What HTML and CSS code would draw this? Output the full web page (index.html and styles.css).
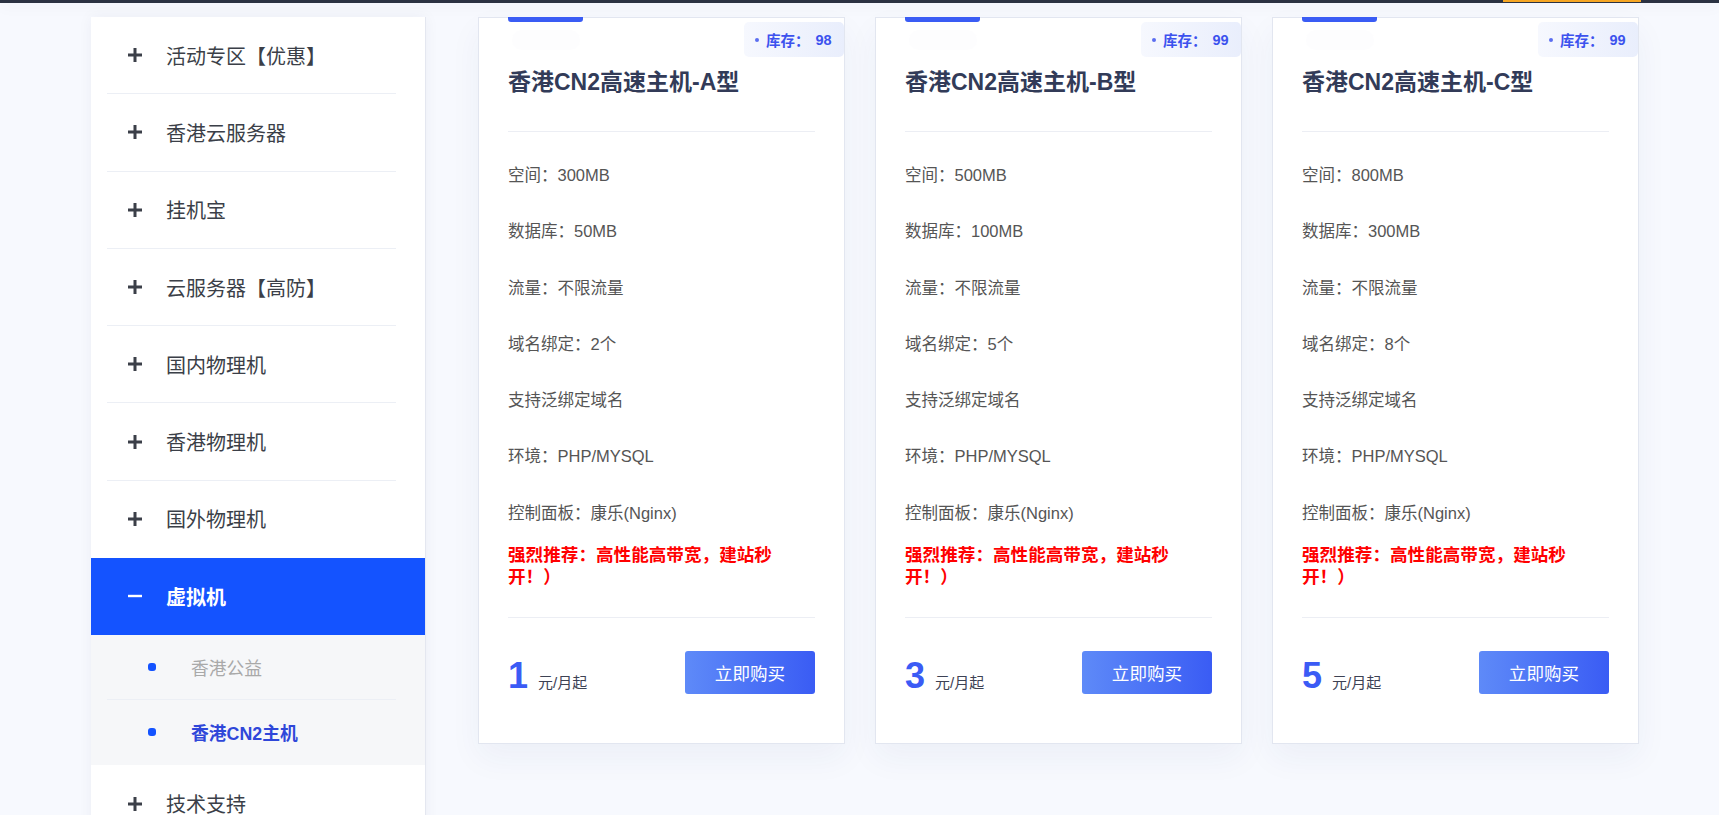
FILE: index.html
```html
<!DOCTYPE html>
<html lang="zh-CN">
<head>
<meta charset="utf-8">
<title>虚拟机 - 香港CN2主机</title>
<link rel="stylesheet" href="styles.css">
</head>
<body>
<div class="topbar"><span class="topbar-accent"></span></div>
<div class="page">
  <aside class="sidebar">
    <ul class="menu">
      <li class="menu-item"><a class="menu-link"><svg class="icon" viewBox="0 0 14 14"><rect x="0" y="5.5" width="14" height="3"/><rect x="5.5" y="0" width="3" height="14"/></svg><span>活动专区【优惠】</span></a></li>
      <li class="menu-item"><a class="menu-link"><svg class="icon" viewBox="0 0 14 14"><rect x="0" y="5.5" width="14" height="3"/><rect x="5.5" y="0" width="3" height="14"/></svg><span>香港云服务器</span></a></li>
      <li class="menu-item"><a class="menu-link"><svg class="icon" viewBox="0 0 14 14"><rect x="0" y="5.5" width="14" height="3"/><rect x="5.5" y="0" width="3" height="14"/></svg><span>挂机宝</span></a></li>
      <li class="menu-item"><a class="menu-link"><svg class="icon" viewBox="0 0 14 14"><rect x="0" y="5.5" width="14" height="3"/><rect x="5.5" y="0" width="3" height="14"/></svg><span>云服务器【高防】</span></a></li>
      <li class="menu-item"><a class="menu-link"><svg class="icon" viewBox="0 0 14 14"><rect x="0" y="5.5" width="14" height="3"/><rect x="5.5" y="0" width="3" height="14"/></svg><span>国内物理机</span></a></li>
      <li class="menu-item"><a class="menu-link"><svg class="icon" viewBox="0 0 14 14"><rect x="0" y="5.5" width="14" height="3"/><rect x="5.5" y="0" width="3" height="14"/></svg><span>香港物理机</span></a></li>
      <li class="menu-item"><a class="menu-link no-line"><svg class="icon" viewBox="0 0 14 14"><rect x="0" y="5.5" width="14" height="3"/><rect x="5.5" y="0" width="3" height="14"/></svg><span>国外物理机</span></a></li>
      <li class="menu-item is-active"><a class="menu-link no-line"><svg class="icon" viewBox="0 0 14 14"><rect x="0" y="5.8" width="14" height="2.4"/></svg><span>虚拟机</span></a></li>
      <li class="submenu">
        <a class="sub-link"><span class="sub-dot"></span><span>香港公益</span></a>
        <a class="sub-link is-current no-line"><span class="sub-dot"></span><span>香港CN2主机</span></a>
      </li>
      <li class="menu-item"><a class="menu-link"><svg class="icon" viewBox="0 0 14 14"><rect x="0" y="5.5" width="14" height="3"/><rect x="5.5" y="0" width="3" height="14"/></svg><span>技术支持</span></a></li>
    </ul>
  </aside>

  <main class="products">
    <section class="card">
      <span class="card-bar"></span>
      <span class="card-glow"></span>
      <div class="stock"><span class="stock-dot"></span>库存：<span class="stock-num">98</span></div>
      <h2 class="card-title">香港CN2高速主机-A型</h2>
      <div class="card-body">
        <ul class="specs">
          <li>空间：300MB</li>
          <li>数据库：50MB</li>
          <li>流量：不限流量</li>
          <li>域名绑定：2个</li>
          <li>支持泛绑定域名</li>
          <li>环境：PHP/MYSQL</li>
          <li>控制面板：康乐(Nginx)</li>
        </ul>
        <p class="promo">强烈推荐：高性能高带宽，建站秒开！）</p>
      </div>
      <div class="card-foot">
        <div class="price"><span class="price-num">1</span><span class="price-unit">元/月起</span></div>
        <a class="buy-btn">立即购买</a>
      </div>
    </section>

    <section class="card">
      <span class="card-bar"></span>
      <span class="card-glow"></span>
      <div class="stock"><span class="stock-dot"></span>库存：<span class="stock-num">99</span></div>
      <h2 class="card-title">香港CN2高速主机-B型</h2>
      <div class="card-body">
        <ul class="specs">
          <li>空间：500MB</li>
          <li>数据库：100MB</li>
          <li>流量：不限流量</li>
          <li>域名绑定：5个</li>
          <li>支持泛绑定域名</li>
          <li>环境：PHP/MYSQL</li>
          <li>控制面板：康乐(Nginx)</li>
        </ul>
        <p class="promo">强烈推荐：高性能高带宽，建站秒开！）</p>
      </div>
      <div class="card-foot">
        <div class="price"><span class="price-num">3</span><span class="price-unit">元/月起</span></div>
        <a class="buy-btn">立即购买</a>
      </div>
    </section>

    <section class="card">
      <span class="card-bar"></span>
      <span class="card-glow"></span>
      <div class="stock"><span class="stock-dot"></span>库存：<span class="stock-num">99</span></div>
      <h2 class="card-title">香港CN2高速主机-C型</h2>
      <div class="card-body">
        <ul class="specs">
          <li>空间：800MB</li>
          <li>数据库：300MB</li>
          <li>流量：不限流量</li>
          <li>域名绑定：8个</li>
          <li>支持泛绑定域名</li>
          <li>环境：PHP/MYSQL</li>
          <li>控制面板：康乐(Nginx)</li>
        </ul>
        <p class="promo">强烈推荐：高性能高带宽，建站秒开！）</p>
      </div>
      <div class="card-foot">
        <div class="price"><span class="price-num">5</span><span class="price-unit">元/月起</span></div>
        <a class="buy-btn">立即购买</a>
      </div>
    </section>
  </main>
</div>
</body>
</html>
```

FILE: styles.css
```css
* {
  box-sizing: border-box;
}

html, body {
  margin: 0;
  padding: 0;
}

body {
  background: #f7f9fe;
  font-family: "Liberation Sans", "Noto Sans CJK SC", sans-serif;
  color: #333;
  overflow: hidden;
}

.topbar {
  position: relative;
  z-index: 2;
  height: 3px;
  background: #2b3242;
  display: flex;
  justify-content: flex-end;
  box-shadow: 0 3px 14px rgba(30, 40, 80, 0.08);
}

.topbar-accent {
  width: 138px;
  height: 2px;
  margin-right: 78px;
  background: #f6a623;
}

.page {
  display: flex;
  align-items: stretch;
  padding-top: 14px;
  min-height: calc(100vh - 3px);
}

/* ---------- sidebar ---------- */
.sidebar {
  flex-shrink: 0;
  width: 335px;
  margin-left: 91px;
  background: #fff;
  border-right: 1px solid #e4e7f0;
  box-shadow: 0 0 14px rgba(30, 40, 80, 0.05);
}

.menu {
  list-style: none;
  margin: 0;
  padding: 0;
}

.menu-item {
  padding: 0 29px 0 16px;
}

.menu-link {
  display: flex;
  align-items: center;
  height: 77.3px;
  padding-left: 21px;
  border-bottom: 1px solid #eceff5;
  font-size: 20px;
  color: #3b3f48;
}

.menu-link.no-line,
.sub-link.no-line {
  border-bottom-color: transparent;
}

.icon {
  width: 14px;
  height: 14px;
  margin-right: 24px;
  fill: #3b3f48;
  flex-shrink: 0;
}

.menu-item.is-active {
  background: #1453ff;
}

.menu-item.is-active .menu-link {
  color: #fff;
  font-weight: bold;
}

.menu-item.is-active .icon {
  fill: #fff;
}

.submenu {
  background: #f6f7f9;
  padding: 0 29px 0 16px;
}

.sub-link {
  display: flex;
  align-items: center;
  height: 65px;
  padding-left: 41px;
  border-bottom: 1px solid #eceff5;
  font-size: 17.8px;
  color: #a9a9a9;
}

.sub-dot {
  width: 8px;
  height: 8px;
  border-radius: 3px;
  background: #1453ff;
  margin-right: 35px;
  flex-shrink: 0;
}

.sub-link.is-current {
  color: #2f47d9;
  font-weight: bold;
}

/* ---------- product cards ---------- */
.products {
  display: flex;
  align-items: flex-start;
  gap: 30px;
  margin-left: 52px;
}

.card {
  position: relative;
  width: 367px;
  padding: 0 29px 49px;
  background: #fff;
  border: 1px solid #e2e6f0;
  box-shadow: 0 14px 30px rgba(40, 60, 120, 0.05);
}

.card-bar {
  display: block;
  width: 75px;
  height: 5px;
  margin-top: -1px;
  background: #3a5cf4;
  border-radius: 0 0 3px 3px;
}

.card-glow {
  position: absolute;
  left: 33px;
  top: 12px;
  width: 68px;
  height: 20px;
  border-radius: 10px;
  background: #fdfdfe;
}

.stock {
  position: absolute;
  top: 4px;
  right: 0;
  display: flex;
  align-items: center;
  width: 100px;
  height: 35px;
  padding-left: 11px;
  border-radius: 5px;
  background: linear-gradient(90deg, #f6f8fe, #e9eefc);
  font-size: 14.5px;
  font-weight: bold;
  color: #3c52ee;
}

.stock-dot {
  width: 4px;
  height: 4px;
  border-radius: 50%;
  background: #5b6ef0;
  margin-right: 7px;
}

.stock-num {
  margin-left: 6px;
}

.card-title {
  margin: 45px 0 0;
  padding-bottom: 34px;
  border-bottom: 1px solid #eceef4;
  font-size: 23px;
  line-height: 30px;
  font-weight: bold;
  color: #323b58;
}

.card-body {
  padding: 15px 0 29px;
  border-bottom: 1px solid #eceef4;
}

.specs {
  list-style: none;
  margin: 0;
  padding: 0;
}

.specs li {
  line-height: 56.3px;
  font-size: 16.5px;
  color: #555;
}

.promo {
  margin: 3px 0 0;
  font-size: 17.6px;
  line-height: 22px;
  font-weight: bold;
  color: #ff0000;
}

.card-foot {
  display: flex;
  align-items: center;
  justify-content: space-between;
  padding-top: 32px;
}

.price {
  display: flex;
  align-items: baseline;
  height: 44px;
  padding-top: 8px;
}

.price-num {
  font-size: 36px;
  line-height: 36px;
  font-weight: bold;
  color: #3b5bf5;
}

.price-unit {
  margin-left: 10px;
  font-size: 15px;
  line-height: 15px;
  color: #3d4254;
}

.buy-btn {
  display: flex;
  align-items: center;
  justify-content: center;
  width: 130px;
  height: 43px;
  border-radius: 3px;
  background: linear-gradient(90deg, #5e8af8, #3a5cf4);
  color: #fff;
  font-size: 17.6px;
}
```
